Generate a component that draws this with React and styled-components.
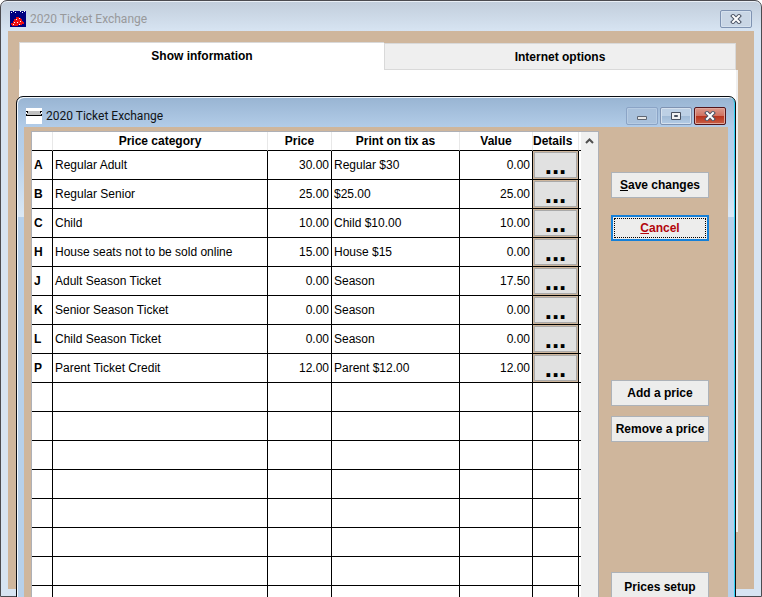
import React from "react";
import styled, { createGlobalStyle, css } from "styled-components";

const Global = createGlobalStyle`
  * { box-sizing: border-box; }
  html, body, #root { height: 100%; }
  body { margin: 0; overflow: hidden; font: 12px/16px "Liberation Sans", Arial, sans-serif; color: #000; background: #fff; }
  button { font: inherit; }
`;

const Desktop = styled.div`
  position: relative;
  height: 100vh;
  overflow: hidden;
`;

const OuterWindow = styled.div`
  height: 100%;
  display: flex;
  flex-direction: column;
  padding: 0 7px 7px;
  border: 1px solid #4b4b50;
  border-radius: 7px 7px 0 0;
  background: linear-gradient(#c1cddb 0, #d7e4f2 30px);
  box-shadow: inset 0 1px #e9eff6;
`;

const TitleBar = styled.header`
  display: flex;
  flex: none;
  align-items: center;
  gap: 4px;
  height: ${(p) => (p.$inner ? 29 : 30)}px;
  padding: 6px 2px 0;
`;

const Title = styled.h1`
  flex: 1;
  margin: 0;
  font: 400 12px/16px Roboto, "Noto Sans", sans-serif;
  color: ${(p) => (p.$muted ? "#98999b" : "#101418")};
`;

const AppIcon = styled.svg`
  display: block;
  flex: none;
  width: 16px;
  height: 16px;
`;

const Caption = styled.button`
  display: grid;
  place-items: center;
  flex: none;
  width: 32px;
  height: 18px;
  padding: 0;
  border: 1px solid #7f93b2;
  border-radius: 2px;
  background: ${(p) => (p.$plain ? "#c9d6e5" : "linear-gradient(#bdd0e5 50%, #a0bad6 50%, #b4cce5)")};
  box-shadow: inset 0 0 0 1px #d5e1ee;
  ${(p) => p.$faint && css`background: #a9c1dc; border-color: #8ba4c6; box-shadow: inset 0 0 0 1px #b7cce3;`}
  ${(p) => p.$danger && css`
    border-color: #53151b;
    background: linear-gradient(#db9a8d, #d0705f 50%, #b7311b 50%, #c95f45);
    box-shadow: inset 0 0 0 1px #e0a79c;
  `}
`;

const CaptionGroup = styled.div`
  display: flex;
  gap: 2px;
`;

const Workspace = styled.main`
  display: flex;
  flex: 1;
  flex-direction: column;
  padding: 11px 16px 57px 11px;
  background: #cfb69c;
`;

const TabPanel = styled.section`
  flex: 1;
  background: #fff;
  border-right: 2px solid #efefef;
`;

const Tabs = styled.div`
  display: grid;
  grid-template-columns: 365fr 352fr;
  align-items: end;
  height: 28px;
  margin-right: 2px;
`;

const Tab = styled.button`
  height: ${(p) => (p.$active ? 28 : 27)}px;
  padding: 0;
  border: 1px solid #d9d9d9;
  border-bottom-color: ${(p) => (p.$active ? "#fff" : "#d9d9d9")};
  border-right-width: ${(p) => (p.$active ? 0 : 1)}px;
  background: ${(p) => (p.$active ? "#fff" : "#efefef")};
  font-weight: 700;
`;

const Dialog = styled.section`
  position: absolute;
  top: 96px;
  left: 16px;
  right: 26px;
  bottom: -20px;
  display: flex;
  flex-direction: column;
  padding: 1px 7px 0;
  border: 1px solid #0a0d12;
  border-radius: 7px 7px 0 0;
  background: linear-gradient(#98b4d2 0, #b2cce8 30px, #b7d0ea 60px, #dbe8f5 120px, #b7d0ea 120px);
  box-shadow: inset 1px 1px #f4f8fc, inset -1px 0 #2fd3f5;
`;

const DialogBody = styled.div`
  display: flex;
  flex: 1;
  gap: 12px;
  min-height: 0;
  padding: 4px 19px 0 7px;
  background: #cfb69c;
`;

const GridFrame = styled.div`
  display: flex;
  flex: 1;
  min-width: 0;
  overflow: hidden;
  border: 1px solid #aeb0b6;
  border-bottom: 0;
  background: #fff;
`;

const PriceTable = styled.table`
  flex: 1;
  width: 100%;
  align-self: flex-start;
  table-layout: fixed;
  border-collapse: separate;
  border-spacing: 0;
`;

const Col = styled.col`
  width: ${(p) => (p.$w ? p.$w + "px" : "auto")};
`;

const HeadCell = styled.th`
  height: 19px;
  padding: 0;
  border-right: 1px solid #e8e8e8;
  border-bottom: 1px solid #000;
  font-weight: 700;
  text-align: ${(p) => (p.$start ? "left" : "center")};
  white-space: nowrap;
`;

const Cell = styled.td`
  height: 29px;
  padding: 0 2px;
  border-right: 1px solid #000;
  border-bottom: 1px solid #000;
  text-align: ${(p) => (p.$num ? "right" : "left")};
  white-space: nowrap;
`;

const CodeCell = styled(Cell)`
  font-weight: 700;
`;

const ButtonCell = styled(Cell)`
  padding: 1px;
  background: #cfb69c;
`;

const EdgeCell = styled.td`
  padding: 0;
  border-bottom: 1px solid #000;
`;

const DetailsButton = styled.button`
  display: block;
  width: 100%;
  height: 26px;
  padding: 0;
  border: 1px solid #a9a9a9;
  background: #e1e1e1;
  font-size: 26px;
  font-weight: 700;
  line-height: 24px;
`;

const ScrollBar = styled.div`
  flex: none;
  width: 17px;
  background: #f0f0f0;
`;

const ScrollButton = styled.button`
  display: grid;
  place-items: center;
  width: 100%;
  height: 18px;
  padding: 0;
  border: 0;
  background: none;
`;

const Actions = styled.aside`
  display: flex;
  flex: none;
  flex-direction: column;
  width: 98px;
  padding-top: 41px;
`;

const ActionGroup = styled.div`
  display: flex;
  flex-direction: column;
  gap: ${(p) => p.$gap}px;
  margin-bottom: ${(p) => p.$after}px;
`;

const Action = styled.button`
  height: ${(p) => (p.$tall ? 29 : 26)}px;
  padding: 0;
  border: 1px solid #adb2b8;
  background: #ededec;
  color: #000;
  font-weight: 700;
  white-space: nowrap;
  ${(p) => p.$focused && css`
    border: 2px solid #1580d8;
    color: #b3060c;
    outline: 1px dotted #000;
    outline-offset: -4px;
  `}
`;

const prices = [
  ["A", "Regular Adult", "30.00", "Regular $30", "0.00"],
  ["B", "Regular Senior", "25.00", "$25.00", "25.00"],
  ["C", "Child", "10.00", "Child $10.00", "10.00"],
  ["H", "House seats not to be sold online", "15.00", "House $15", "0.00"],
  ["J", "Adult Season Ticket", "0.00", "Season", "17.50"],
  ["K", "Senior Season Ticket", "0.00", "Season", "0.00"],
  ["L", "Child Season Ticket", "0.00", "Season", "0.00"],
  ["P", "Parent Ticket Credit", "12.00", "Parent $12.00", "12.00"],
];
const blankRows = Array.from({ length: 8 }, (_, i) => i);

const Cross = () => (
  <svg width="12" height="10" viewBox="0 0 12 10">
    <path d="M3 2l6 6M9 2L3 8" stroke="#4c5566" strokeWidth="4" strokeLinecap="square" />
    <path d="M3 2l6 6M9 2L3 8" stroke="#fff" strokeWidth="2" strokeLinecap="square" />
  </svg>
);

export default function App() {
  return (
    <Desktop>
      <Global />
      <OuterWindow>
        <TitleBar>
          <AppIcon viewBox="0 0 16 16" aria-hidden="true">
            <path fill="#000080" d="M0 0h16v16H0z" />
            <path fill="#fff" d="M1 1h1v1H1zM3 0h1v1H3zM5 1h1v1H5zM10 0h1v1h-1zM12 1h1v1h-1zM14 0h1v1h-1z" />
            <path fill="#f01010" d="M6 6h3v1h2v1h1v2h1v1h1v2h-2v1H8v1H2v-1H1v-2h2v-2h1V8h2z" />
            <path fill="#fff" d="M6 8h1v1H6zM9 7h1v1H9zM10 10h1v1h-1zM4 11h1v1H4zM7 11h1v1H7zM3 13h1v1H3zM9 13h1v1H9z" />
          </AppIcon>
          <Title $muted>2020 Ticket Exchange</Title>
          <Caption $plain aria-label="Close"><Cross /></Caption>
        </TitleBar>
        <Workspace>
          <Tabs role="tablist">
            <Tab role="tab" aria-selected="true" $active>Show information</Tab>
            <Tab role="tab" aria-selected="false">Internet options</Tab>
          </Tabs>
          <TabPanel role="tabpanel" />
        </Workspace>
      </OuterWindow>

      <Dialog role="dialog" aria-label="2020 Ticket Exchange">
        <TitleBar $inner>
          <AppIcon viewBox="0 0 16 16" aria-hidden="true">
            <path fill="#fff" d="M0 0h16v16H0z" />
            <path fill="#c0c0c0" d="M1 3h14v4H1z" />
            <path fill="#000" d="M0 3h2v1H0zM14 3h2v1h-2zM1 4h1v1H1zM14 4h1v1h-1zM0 6h1v1H0zM15 6h1v1h-1zM0 7h16v1H0z" />
          </AppIcon>
          <Title>2020 Ticket Exchange</Title>
          <CaptionGroup>
            <Caption $faint aria-label="Minimize">
              <svg width="12" height="10" viewBox="0 0 12 10"><path d="M1.500 5.500h9v3h-9z" fill="#e8e8e8" stroke="#5e6673" /></svg>
            </Caption>
            <Caption aria-label="Maximize">
              <svg width="12" height="10" viewBox="0 0 12 10"><path d="M1.500 1.500h9v7h-9z" fill="#f2f2f2" stroke="#48505f" /><path d="M4.500 4.500h3v1h-3z" fill="#8da9c9" stroke="#48505f" /></svg>
            </Caption>
            <Caption $danger aria-label="Close"><Cross /></Caption>
          </CaptionGroup>
        </TitleBar>
        <DialogBody>
          <GridFrame>
            <PriceTable>
              <colgroup>
                <Col $w={21} /><Col /><Col $w={64} /><Col $w={128} /><Col $w={73} /><Col $w={46} /><Col $w={2} />
              </colgroup>
              <thead>
                <tr>
                  <HeadCell aria-label="Code" />
                  <HeadCell>Price category</HeadCell>
                  <HeadCell>Price</HeadCell>
                  <HeadCell>Print on tix as</HeadCell>
                  <HeadCell>Value</HeadCell>
                  <HeadCell $start>Details</HeadCell>
                  <EdgeCell />
                </tr>
              </thead>
              <tbody>
                {prices.map(([code, category, price, printAs, value]) => (
                  <tr key={code}>
                    <CodeCell>{code}</CodeCell>
                    <Cell>{category}</Cell>
                    <Cell $num>{price}</Cell>
                    <Cell>{printAs}</Cell>
                    <Cell $num>{value}</Cell>
                    <ButtonCell><DetailsButton aria-label={`Details for ${category}`}>...</DetailsButton></ButtonCell>
                    <EdgeCell />
                  </tr>
                ))}
                {blankRows.map((i) => (
                  <tr key={i}>
                    <Cell /><Cell /><Cell /><Cell /><Cell /><Cell /><EdgeCell />
                  </tr>
                ))}
              </tbody>
            </PriceTable>
            <ScrollBar>
              <ScrollButton aria-label="Scroll up">
                <svg width="9" height="6" viewBox="0 0 9 6"><path d="M1 5l3.500-3.500L8 5" fill="none" stroke="#505050" strokeWidth="2" /></svg>
              </ScrollButton>
            </ScrollBar>
          </GridFrame>
          <Actions>
            <ActionGroup $gap={17} $after={139}>
              <Action><u>S</u>ave changes</Action>
              <Action $focused><u>C</u>ancel</Action>
            </ActionGroup>
            <ActionGroup $gap={10} $after={130}>
              <Action>Add a price</Action>
              <Action>Remove a price</Action>
            </ActionGroup>
            <ActionGroup $gap={10} $after={0}>
              <Action $tall>Prices setup</Action>
            </ActionGroup>
          </Actions>
        </DialogBody>
      </Dialog>
    </Desktop>
  );
}
